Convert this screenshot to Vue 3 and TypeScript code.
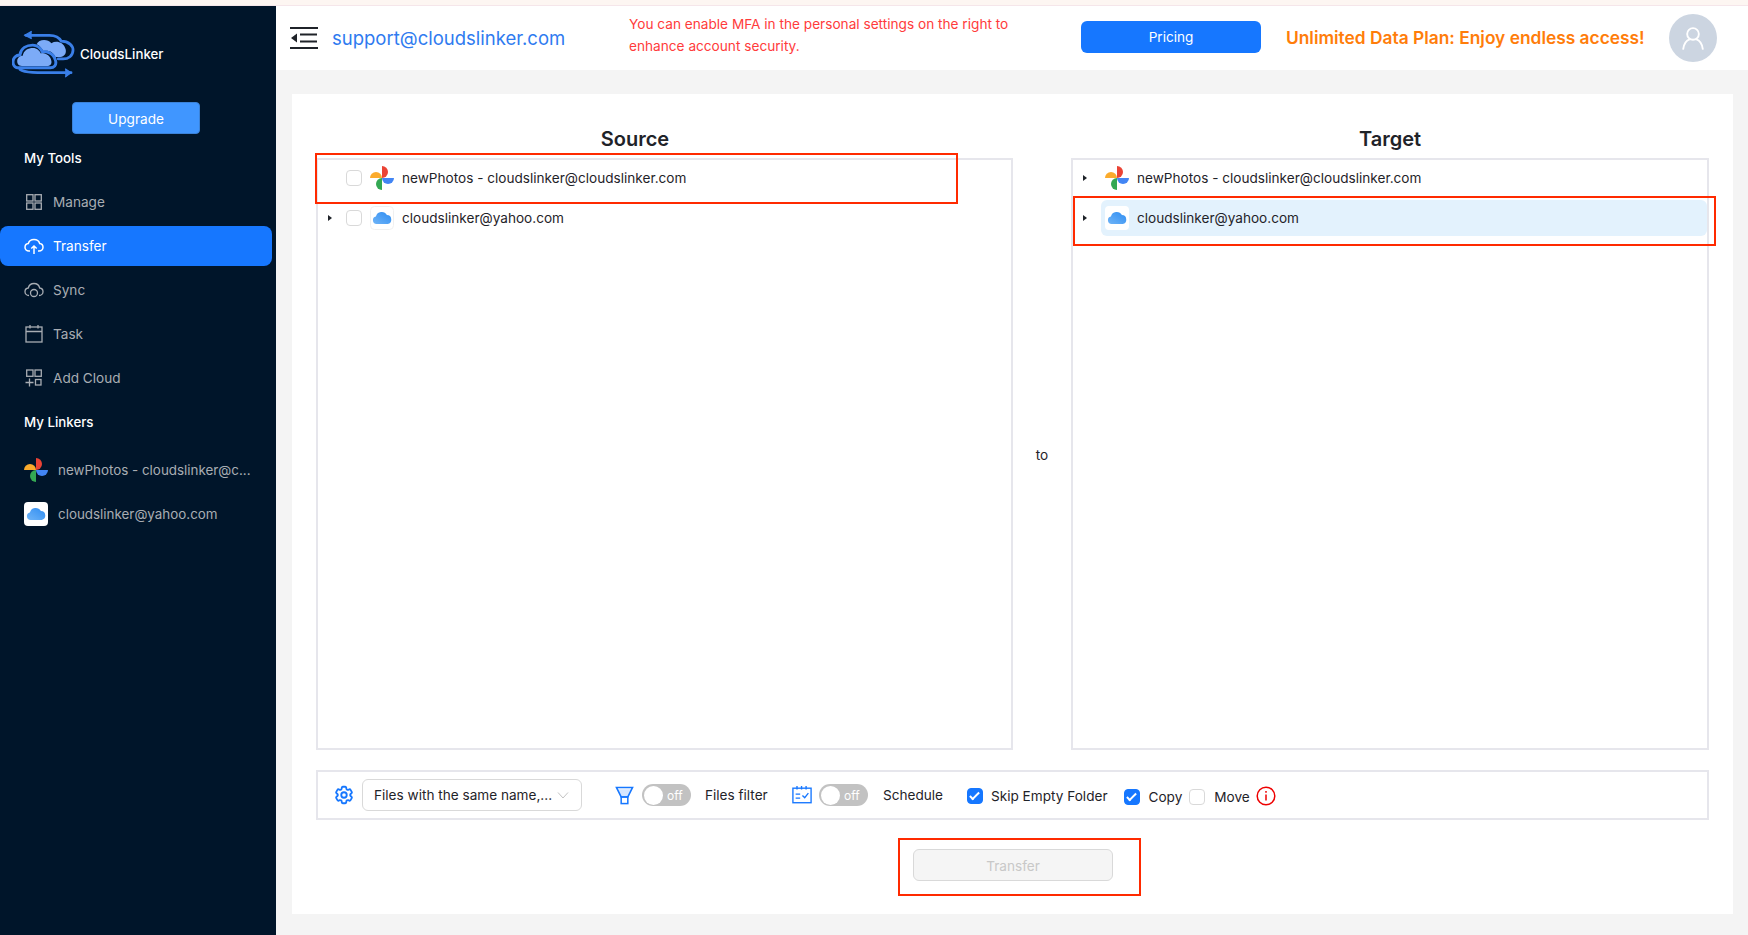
<script setup lang="ts">
type NavItem = { label: string; icon: string; active?: boolean };
const tools: NavItem[] = [
  { label: 'Manage', icon: 'manage' },
  { label: 'Transfer', icon: 'transfer', active: true },
  { label: 'Sync', icon: 'sync' },
  { label: 'Task', icon: 'task' },
  { label: 'Add Cloud', icon: 'add' },
];
</script>

<template>
  <div class="page">
    <div class="strip"></div>
    <div class="shell">
      <aside class="sidebar">
        <div class="brand">
          <svg class="logo" viewBox="0 0 64 48" fill="none">
            <path d="M25 14C27 9 36 8 40 13 45 10 52 12 54 18 56 22 54 27 49 27H44C42 22 37 20 32 21 30 18 28 15 25 14Z" fill="#7cabf7" />
            <path d="M14 5H38C44 5 48 7 50 11 58 11 62 16 62 20 62 26 57 29 52 29H47" stroke="#3a7fe8" stroke-width="2.800" stroke-linecap="round" />
            <path d="M20 1l-7 4 7 3.500" fill="#3a7fe8" stroke="#3a7fe8" stroke-width="1.200" />
            <path d="M7 38C2 38 1 34 1 32 1 28 4 25 8 25 9 18 15 15 21 15 26 15 29 18 31 22 33 21 42 22 44 30 46 36 42 38 39 38Z" fill="#00152a" stroke="#3a7fe8" stroke-width="3" />
            <path d="M7 38C2 38 1 34 1 32 1 28 4 25 8 25 9 18 15 15 21 15 26 15 29 18 31 22 33 21 42 22 44 30 46 36 42 38 39 38Z" fill="#7cabf7" transform="translate(4.500 5.800) scale(.8)" />
            <path d="M8 39.500C13 43 20 43 60 43" stroke="#3a7fe8" stroke-width="2.800" stroke-linecap="round" />
            <path d="M54 39l6 4-6 4.500" fill="#3a7fe8" stroke="#3a7fe8" stroke-width="1.200" />
          </svg>
          <span class="brand-name">CloudsLinker</span>
        </div>
        <div class="upgrade-row"><button class="upgrade">Upgrade</button></div>
        <div class="side-title tools-title">My Tools</div>
        <nav class="nav">
          <div v-for="item in tools" :key="item.label" class="nav-item" :class="{ active: item.active }">
            <svg class="nav-icon" viewBox="0 0 20 20" fill="none" stroke="currentColor" stroke-width="1.300">
              <template v-if="item.icon === 'manage'">
                <rect x="2.700" y="2.700" width="6.300" height="6.300" /><rect x="11" y="2.700" width="6.300" height="6.300" />
                <rect x="2.700" y="11" width="6.300" height="6.300" /><rect x="11" y="11" width="6.300" height="6.300" />
              </template>
              <template v-else-if="item.icon === 'transfer'">
                <path d="M6 15H5c-2.400 0-4-1.800-4-3.800 0-2 1.500-3.500 3.300-3.700C5 5 7.300 3.500 10 3.500s5 1.500 5.700 4c1.800.2 3.300 1.700 3.300 3.700 0 2-1.600 3.800-4 3.800h-1" stroke-width="1.500" />
                <path d="M10 18v-8M7.300 12.500 10 10l2.700 2.500" stroke-width="1.500" />
              </template>
              <template v-else-if="item.icon === 'sync'">
                <path d="M5 15.500c-2.400 0-4-1.800-4-3.800 0-2 1.500-3.500 3.300-3.700C5 5 7.300 3.500 10 3.500s5 1.500 5.700 4.500c1.800.2 3.300 1.700 3.300 3.700 0 2-1.600 3.800-4 3.800" />
                <circle cx="10" cy="13" r="3.500" />
              </template>
              <template v-else-if="item.icon === 'task'">
                <rect x="2" y="3" width="16" height="15" /><path d="M2 7.500h16M6 1v3.500M14 1v3.500" />
              </template>
              <template v-else>
                <rect x="2.700" y="2" width="6.300" height="6.300" /><rect x="11" y="2" width="6.300" height="6.300" />
                <rect x="11.500" y="11.500" width="5.500" height="5.500" /><path d="M5.500 10.500v8M1.500 14.500h8" />
              </template>
            </svg>
            <span>{{ item.label }}</span>
          </div>
        </nav>
        <div class="side-title linkers-title">My Linkers</div>
        <div class="linker">
          <svg class="linker-icon" viewBox="0 0 24 24">
            <path d="M12 12V0a6 6 0 0 1 0 12Z" fill="#ea4335" />
            <path d="M12 12h12a6 6 0 0 1-12 0Z" fill="#4285f4" />
            <path d="M12 12v12a6 6 0 0 1 0-12Z" fill="#34a853" />
            <path d="M12 12H0a6 6 0 0 1 12 0Z" fill="#fbab2c" />
          </svg>
          <span class="linker-text">newPhotos - cloudslinker@c...</span>
        </div>
        <div class="linker">
          <svg class="linker-icon" viewBox="0 0 24 24">
            <defs>
              <linearGradient id="cloudFill" x1="0" y1="1" x2="1" y2="0">
                <stop offset="0" stop-color="#6fb4f7" />
                <stop offset="1" stop-color="#2f8df2" />
              </linearGradient>
            </defs>
            <rect width="24" height="24" rx="4" fill="#fff" />
            <path d="M6.500 18a3.800 3.800 0 0 1-.6-7.500 6 6 0 0 1 11-1.400 4.500 4.500 0 0 1 .8 8.900Z" fill="url(#cloudFill)" />
          </svg>
          <span class="linker-text">cloudslinker@yahoo.com</span>
        </div>
      </aside>

      <div class="main">
        <header class="header">
          <svg class="menu-icon" viewBox="0 0 28 24" fill="none" stroke="#1f2329" stroke-width="2">
            <path d="M0 2h28M10 8.500h17M10 15.500h17M0 22h28" />
            <path d="M1 12l6-4.500v9Z" fill="#1f2329" stroke="none" />
          </svg>
          <a class="email">support@cloudslinker.com</a>
          <p class="mfa">You can enable MFA in the personal settings on the right to enhance account security.</p>
          <button class="pricing">Pricing</button>
          <span class="promo">Unlimited Data Plan: Enjoy endless access!</span>
          <span class="avatar">
            <svg viewBox="0 0 24 24" fill="none" stroke="#fff" stroke-width="1.600">
              <circle cx="12" cy="8.500" r="5" />
              <path d="M3.500 22c.5-5 3-8 6-9M20.500 22c-.5-5-3-8-6-9" />
            </svg>
          </span>
        </header>

        <main class="content">
          <section class="card">
            <div class="panels">
              <div class="column">
                <h2 class="source-title">Source</h2>
                <div class="tree">
                  <div class="row">
                    <span class="caret-slot"></span>
                    <span class="checkbox"></span>
                    <svg class="tree-icon" viewBox="0 0 24 24">
                      <path d="M12 12V0a6 6 0 0 1 0 12Z" fill="#ea4335" />
                      <path d="M12 12h12a6 6 0 0 1-12 0Z" fill="#4285f4" />
                      <path d="M12 12v12a6 6 0 0 1 0-12Z" fill="#34a853" />
                      <path d="M12 12H0a6 6 0 0 1 12 0Z" fill="#fbab2c" />
                    </svg>
                    <span class="row-text">newPhotos - cloudslinker@cloudslinker.com</span>
                  </div>
                  <div class="row">
                    <span class="caret-slot"><i class="caret"></i></span>
                    <span class="checkbox"></span>
                    <svg class="tree-icon" viewBox="0 0 24 24">
                      <rect x=".5" y=".5" width="23" height="23" rx="4" fill="#fff" stroke="#f0f0f0" />
                      <path d="M6.500 18a3.800 3.800 0 0 1-.6-7.500 6 6 0 0 1 11-1.400 4.500 4.500 0 0 1 .8 8.900Z" fill="url(#cloudFill)" />
                    </svg>
                    <span class="row-text">cloudslinker@yahoo.com</span>
                  </div>
                </div>
              </div>
              <div class="to">to</div>
              <div class="column">
                <h2>Target</h2>
                <div class="tree">
                  <div class="row">
                    <span class="caret-slot"><i class="caret"></i></span>
                    <span class="row-body">
                      <svg class="tree-icon" viewBox="0 0 24 24">
                        <path d="M12 12V0a6 6 0 0 1 0 12Z" fill="#ea4335" />
                        <path d="M12 12h12a6 6 0 0 1-12 0Z" fill="#4285f4" />
                        <path d="M12 12v12a6 6 0 0 1 0-12Z" fill="#34a853" />
                        <path d="M12 12H0a6 6 0 0 1 12 0Z" fill="#fbab2c" />
                      </svg>
                      <span class="row-text">newPhotos - cloudslinker@cloudslinker.com</span>
                    </span>
                  </div>
                  <div class="row">
                    <span class="caret-slot"><i class="caret"></i></span>
                    <span class="row-body selected">
                      <svg class="tree-icon" viewBox="0 0 24 24">
                        <rect width="24" height="24" rx="4" fill="#fff" />
                        <path d="M6.500 18a3.800 3.800 0 0 1-.6-7.500 6 6 0 0 1 11-1.400 4.500 4.500 0 0 1 .8 8.900Z" fill="url(#cloudFill)" />
                      </svg>
                      <span class="row-text">cloudslinker@yahoo.com</span>
                    </span>
                  </div>
                </div>
              </div>
            </div>

            <div class="toolbar">
              <svg class="gear" viewBox="0 0 24 24" fill="none" stroke="#1677ff" stroke-width="2" stroke-linejoin="round">
                <path d="M9.594 3.940c.09-.542.56-.94 1.110-.94h2.593c.55 0 1.020.398 1.110.94l.213 1.281c.063.374.313.686.645.870.074.04.147.083.22.127.325.196.72.257 1.075.124l1.217-.456a1.125 1.125 0 0 1 1.370.490l1.296 2.247a1.125 1.125 0 0 1-.26 1.431l-1.003.827c-.293.241-.438.613-.43.992a7.723 7.723 0 0 1 0 .255c-.008.378.137.75.43.991l1.004.827c.424.35.534.955.26 1.430l-1.298 2.247a1.125 1.125 0 0 1-1.369.491l-1.217-.456c-.355-.133-.75-.072-1.076.124a6.470 6.470 0 0 1-.22.128c-.331.183-.581.495-.644.869l-.213 1.281c-.09.543-.56.94-1.110.94h-2.594c-.55 0-1.019-.398-1.110-.94l-.213-1.281c-.062-.374-.312-.686-.644-.87a6.520 6.520 0 0 1-.22-.127c-.325-.196-.72-.257-1.076-.124l-1.217.456a1.125 1.125 0 0 1-1.369-.49l-1.297-2.247a1.125 1.125 0 0 1 .26-1.431l1.004-.827c.292-.24.437-.613.43-.991a6.932 6.932 0 0 1 0-.255c.007-.38-.138-.751-.43-.992l-1.004-.827a1.125 1.125 0 0 1-.26-1.430l1.297-2.247a1.125 1.125 0 0 1 1.370-.491l1.216.456c.356.133.751.072 1.076-.124.072-.044.146-.086.22-.128.332-.183.582-.495.644-.869l.214-1.280Z" />
                <path d="M15 12a3 3 0 1 1-6 0 3 3 0 0 1 6 0Z" />
              </svg>
              <div class="select">
                <span>Files with the same name,...</span>
                <svg viewBox="0 0 12 12" fill="none" stroke="#c4c4c4" stroke-width="1"><path d="M1 3.500 6 9l5-5.500" /></svg>
              </div>
              <svg class="filter" viewBox="0 0 20 20" fill="none" stroke="#1677ff" stroke-width="1.600">
                <path d="M3 3.500h14l-3.500 7h-7Z" fill="#1677ff" stroke="none" opacity=".18" />
                <path d="M1.500 1.500h17l-5 10h-7Z" /><rect x="6.500" y="11.500" width="7" height="7" />
              </svg>
              <div class="switch"><i></i><span>off</span></div>
              <span class="opt filter-label">Files filter</span>
              <svg class="calendar" viewBox="0 0 22 22" fill="none" stroke="#1677ff" stroke-width="1.500">
                <rect x="1" y="3.500" width="20" height="16" />
                <path d="M5.500 1v4M10.500 1v4M15.500 1v4M4 10h5M4 14.500h5M11.500 11.500l2.500 2.500 4-5" />
              </svg>
              <div class="switch switch-tight"><i></i><span>off</span></div>
              <span class="opt schedule-label">Schedule</span>
              <label class="check skip"><i class="tick on"></i><span>Skip Empty Folder</span></label>
              <label class="check copy"><i class="tick on"></i><span>Copy</span></label>
              <label class="check move"><i class="tick"></i><span>Move</span></label>
              <svg class="info" viewBox="0 0 20 20" fill="none" stroke="#ee0000" stroke-width="1.500">
                <circle cx="10" cy="10" r="8.800" /><path d="M10 8.500v6M10 5v1.800" />
              </svg>
            </div>

            <div class="action"><button class="transfer-btn" disabled>Transfer</button></div>

            <div class="mark mark-source"></div>
            <div class="mark mark-target"></div>
            <div class="mark mark-action"></div>
          </section>
        </main>
      </div>
    </div>
  </div>
</template>

<style>
html,
body {
  margin: 0;
  overflow: hidden;
}
</style>

<style scoped>
.page {
  width: 1748px;
  height: 935px;
  display: flex;
  flex-direction: column;
  background: #f4f4f4;
  font-family: Inter, 'Noto Sans', sans-serif;
  font-size: 13.6px;
  color: #1f2329;
}
.strip {
  height: 5px;
  flex: none;
  background: #fdf6f2;
  border-bottom: 1px solid #f5e6ea;
}
.shell {
  flex: 1;
  display: flex;
  min-height: 0;
}
.sidebar {
  width: 276px;
  flex: none;
  background: #00152a;
  color: #a8adb3;
}
.brand {
  height: 48px;
  margin-top: 24px;
  padding-left: 12px;
  display: flex;
  align-items: center;
  gap: 5px;
}
.logo {
  width: 63px;
  height: 48px;
}
.brand-name {
  color: #fff;
  font-weight: 500;
  font-size: 13.3px;
}
.upgrade-row {
  margin-top: 24px;
  padding-left: 72px;
}
.upgrade {
  display: block;
  width: 128px;
  height: 32px;
  border: 1px solid #3b82d8;
  border-radius: 4px;
  background: #4096ff;
  color: #fff;
  font: inherit;
  padding-top: 3px;
}
.side-title {
  color: #fff;
  font-weight: 500;
  font-size: 13.3px;
  padding-left: 24px;
  line-height: 22px;
}
.tools-title {
  margin-top: 13px;
}
.nav {
  margin-top: 13px;
  display: flex;
  flex-direction: column;
  gap: 4px;
}
.nav-item {
  width: 272px;
  height: 40px;
  padding-left: 24px;
  box-sizing: border-box;
  display: flex;
  align-items: center;
  gap: 9px;
  border-radius: 0 8px 8px 0;
}
.nav-item.active {
  background: #1677ff;
  color: #fff;
  border-radius: 8px;
}
.nav-icon {
  width: 20px;
  height: 20px;
  flex: none;
}
.linkers-title {
  margin-top: 13px;
  margin-bottom: 15px;
}
.linker {
  height: 44px;
  padding-left: 24px;
  display: flex;
  align-items: center;
  gap: 10px;
}
.linker-icon {
  width: 24px;
  height: 24px;
  flex: none;
}
.linker-text {
  font-size: 13.4px;
  white-space: nowrap;
}
.main {
  flex: 1;
  min-width: 0;
  display: flex;
  flex-direction: column;
}
.header {
  height: 64px;
  flex: none;
  background: #fff;
  display: flex;
  align-items: center;
  padding-left: 14px;
  box-sizing: border-box;
}
.menu-icon {
  width: 28px;
  height: 24px;
  flex: none;
}
.email {
  margin-left: 14px;
  width: 297px;
  flex: none;
  font-size: 18.5px;
  color: #2f7bf0;
}
.mfa {
  margin: 0 0 6px;
  width: 396px;
  flex: none;
  font-size: 13.65px;
  color: #ff3b3b;
  line-height: 22px;
}
.pricing {
  margin: 0 0 2px 56px;
  width: 180px;
  height: 32px;
  flex: none;
  border: 0;
  border-radius: 6px;
  background: #1677ff;
  color: #fff;
  font: inherit;
}
.promo {
  margin: 0 0 1px 25px;
  width: 383px;
  flex: none;
  color: #ff7d0a;
  font-size: 17.35px;
  font-weight: 600;
  white-space: nowrap;
}
.avatar {
  width: 48px;
  height: 48px;
  flex: none;
  border-radius: 50%;
  background: #ccd5e1;
  display: flex;
  align-items: center;
  justify-content: center;
}
.avatar svg {
  width: 28px;
  height: 28px;
}
.content {
  flex: 1;
  min-height: 0;
  padding: 24px 15px 21px 16px;
}
.card {
  position: relative;
  height: 100%;
  box-sizing: border-box;
  background: #fff;
  padding: 0 24px;
}
.panels {
  display: grid;
  grid-template-columns: 697px 58px 638px;
  height: 656px;
}
.column {
  display: flex;
  flex-direction: column;
  min-width: 0;
}
h2 {
  margin: 0;
  height: 64px;
  box-sizing: border-box;
  padding-top: 32px;
  line-height: 26px;
  text-align: center;
  font-size: 20px;
  font-weight: 600;
}
.source-title {
  padding-right: 59px;
}
.tree {
  flex: 1;
  border: 2px solid #e6e6ec;
  display: flex;
  flex-direction: column;
  gap: 4px;
}
.row {
  height: 36px;
  display: flex;
  align-items: center;
}
.caret-slot {
  width: 16px;
  margin-left: 4px;
  flex: none;
  display: flex;
  justify-content: center;
}
.caret {
  width: 0;
  height: 0;
  border-left: 4px solid #1f2329;
  border-top: 3.500px solid transparent;
  border-bottom: 3.500px solid transparent;
}
.checkbox {
  width: 16px;
  height: 16px;
  box-sizing: border-box;
  flex: none;
  margin-left: 8px;
  border: 1px solid #d9d9d9;
  border-radius: 4px;
}
.tree-icon {
  width: 24px;
  height: 24px;
  flex: none;
  margin-left: 8px;
}
.row-text {
  margin-left: 8px;
  white-space: nowrap;
}
.row-body {
  flex: 1;
  height: 36px;
  margin-left: 8px;
  border-radius: 6px;
  display: flex;
  align-items: center;
}
.row-body .tree-icon {
  margin-left: 4px;
}
.selected {
  background: #e3f2fd;
}
.to {
  display: flex;
  align-items: center;
  justify-content: center;
  padding-top: 66px;
  box-sizing: border-box;
}
.toolbar {
  margin-top: 20px;
  height: 50px;
  box-sizing: border-box;
  border: 2px solid #e6e6ec;
  display: flex;
  align-items: center;
  padding-left: 15px;
}
.gear {
  width: 22px;
  height: 22px;
  flex: none;
}
.select {
  margin-left: 7px;
  width: 220px;
  height: 32px;
  flex: none;
  box-sizing: border-box;
  border: 1px solid #d9d9d9;
  border-radius: 6px;
  padding: 0 12px 0 11px;
  display: flex;
  align-items: center;
  justify-content: space-between;
  white-space: nowrap;
}
.select svg {
  width: 12px;
  height: 12px;
  flex: none;
}
.filter {
  margin-left: 33px;
  width: 19px;
  height: 19px;
  flex: none;
}
.switch {
  margin-left: 8px;
  width: 49px;
  height: 22px;
  flex: none;
  box-sizing: border-box;
  border-radius: 11px;
  background: #c2c2c2;
  display: flex;
  align-items: center;
  color: #fff;
  font-size: 12px;
  padding-left: 2px;
}
.switch-tight {
  margin-left: 7px;
}
.switch i {
  width: 19px;
  height: 19px;
  border-radius: 50%;
  background: #fff;
}
.switch span {
  margin-left: 4px;
}
.opt {
  white-space: nowrap;
}
.filter-label {
  margin-left: 14px;
  width: 63px;
}
.calendar {
  margin-left: 24px;
  width: 20px;
  height: 20px;
  flex: none;
}
.schedule-label {
  margin-left: 15px;
  width: 60px;
}
.check {
  display: flex;
  align-items: center;
  white-space: nowrap;
  gap: 9px;
}
.skip {
  margin-left: 24px;
  gap: 8px;
  margin-top: 1px;
}
.copy {
  margin-left: 16px;
  margin-top: 4px;
}
.move {
  margin-left: 7px;
  margin-top: 4px;
}
.tick {
  width: 16px;
  height: 16px;
  box-sizing: border-box;
  border: 1px solid #d9d9d9;
  border-radius: 4px;
  position: relative;
  flex: none;
}
.tick.on {
  background: #1677ff;
  border-color: #1677ff;
}
.tick.on::after {
  content: '';
  position: absolute;
  left: 4px;
  top: 1px;
  width: 5px;
  height: 10px;
  box-sizing: border-box;
  border: solid #fff;
  border-width: 0 2px 2px 0;
  transform: rotate(45deg);
}
.info {
  margin: 2px 0 0 6px;
  width: 20px;
  height: 20px;
  flex: none;
}
.action {
  margin-top: 29px;
  padding-left: 597px;
}
.transfer-btn {
  display: block;
  width: 200px;
  height: 32px;
  box-sizing: border-box;
  border: 1px solid #d9d9d9;
  border-radius: 6px;
  background: #f5f5f5;
  color: #c8c8c8;
  font: inherit;
  padding-top: 3px;
}
.mark {
  position: absolute;
  box-sizing: border-box;
  border: 2px solid #ff2a00;
}
.mark-source {
  left: 23px;
  top: 59px;
  width: 643px;
  height: 51px;
}
.mark-target {
  left: 781px;
  top: 102px;
  width: 643px;
  height: 50px;
}
.mark-action {
  left: 606px;
  top: 744px;
  width: 243px;
  height: 58px;
}
</style>
